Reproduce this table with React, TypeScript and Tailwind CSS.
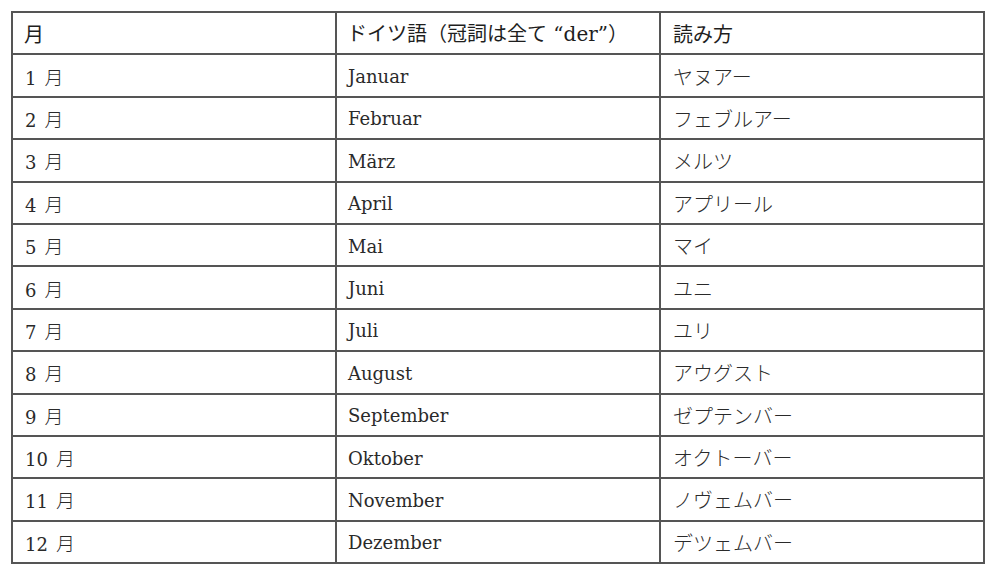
import React from "react";

const rows: [string, string, string][] = [
  ["1 月", "Januar", "ヤヌアー"],
  ["2 月", "Februar", "フェブルアー"],
  ["3 月", "März", "メルツ"],
  ["4 月", "April", "アプリール"],
  ["5 月", "Mai", "マイ"],
  ["6 月", "Juni", "ユニ"],
  ["7 月", "Juli", "ユリ"],
  ["8 月", "August", "アウグスト"],
  ["9 月", "September", "ゼプテンバー"],
  ["10 月", "Oktober", "オクトーバー"],
  ["11 月", "November", "ノヴェムバー"],
  ["12 月", "Dezember", "デツェムバー"],
];

const cjk = '"Noto Sans CJK JP", sans-serif';

export default function App() {
  return (
    <div
      className="w-[1000px] h-[577px] bg-white pt-[11px] pl-[11px] text-[#2a2a2a]"
      style={{ fontFamily: '"DejaVu Serif", "Noto Sans CJK JP", serif' }}
    >
      <table className="border-collapse table-fixed w-[972px] text-[18px] leading-none">
        <colgroup>
          <col className="w-[324px]" />
          <col className="w-[324px]" />
          <col className="w-[324px]" />
        </colgroup>
        <tbody>
          <tr className="h-[42.4px]">
            <td className="border-2 border-[#555] pl-[11px] pt-[1px] align-middle text-[20px] text-[#1e1e1e]" style={{ fontFamily: cjk }}>月</td>
            <td className="border-2 border-[#555] pl-[10px] pt-[1px] align-middle text-[20px] text-[#1e1e1e]">
              <span style={{ fontFamily: cjk }}>ドイツ語（冠詞は全て</span>
              <span> “der”</span>
              <span style={{ fontFamily: cjk }}>）</span>
            </td>
            <td className="border-2 border-[#555] pl-[12px] pt-[1px] align-middle text-[20px] text-[#1e1e1e]" style={{ fontFamily: cjk }}>読み方</td>
          </tr>
          {rows.map(([m, de, kana]) => (
            <tr key={de} className="h-[42.4px]">
              <td className="border-2 border-[#555] pl-[12px] pt-[3px] align-middle">
                <span>{m.split(" ")[0]}</span>
                <span className="ml-[8px] text-[19px]" style={{ fontFamily: cjk, fontWeight: 300 }}>月</span>
              </td>
              <td className="border-2 border-[#555] pl-[11px] pt-[3px] align-middle">{de}</td>
              <td className="border-2 border-[#555] pl-[12px] pt-[2px] align-middle text-[20px]" style={{ fontFamily: cjk, fontWeight: 300 }}>{kana}</td>
            </tr>
          ))}
        </tbody>
      </table>
    </div>
  );
}
